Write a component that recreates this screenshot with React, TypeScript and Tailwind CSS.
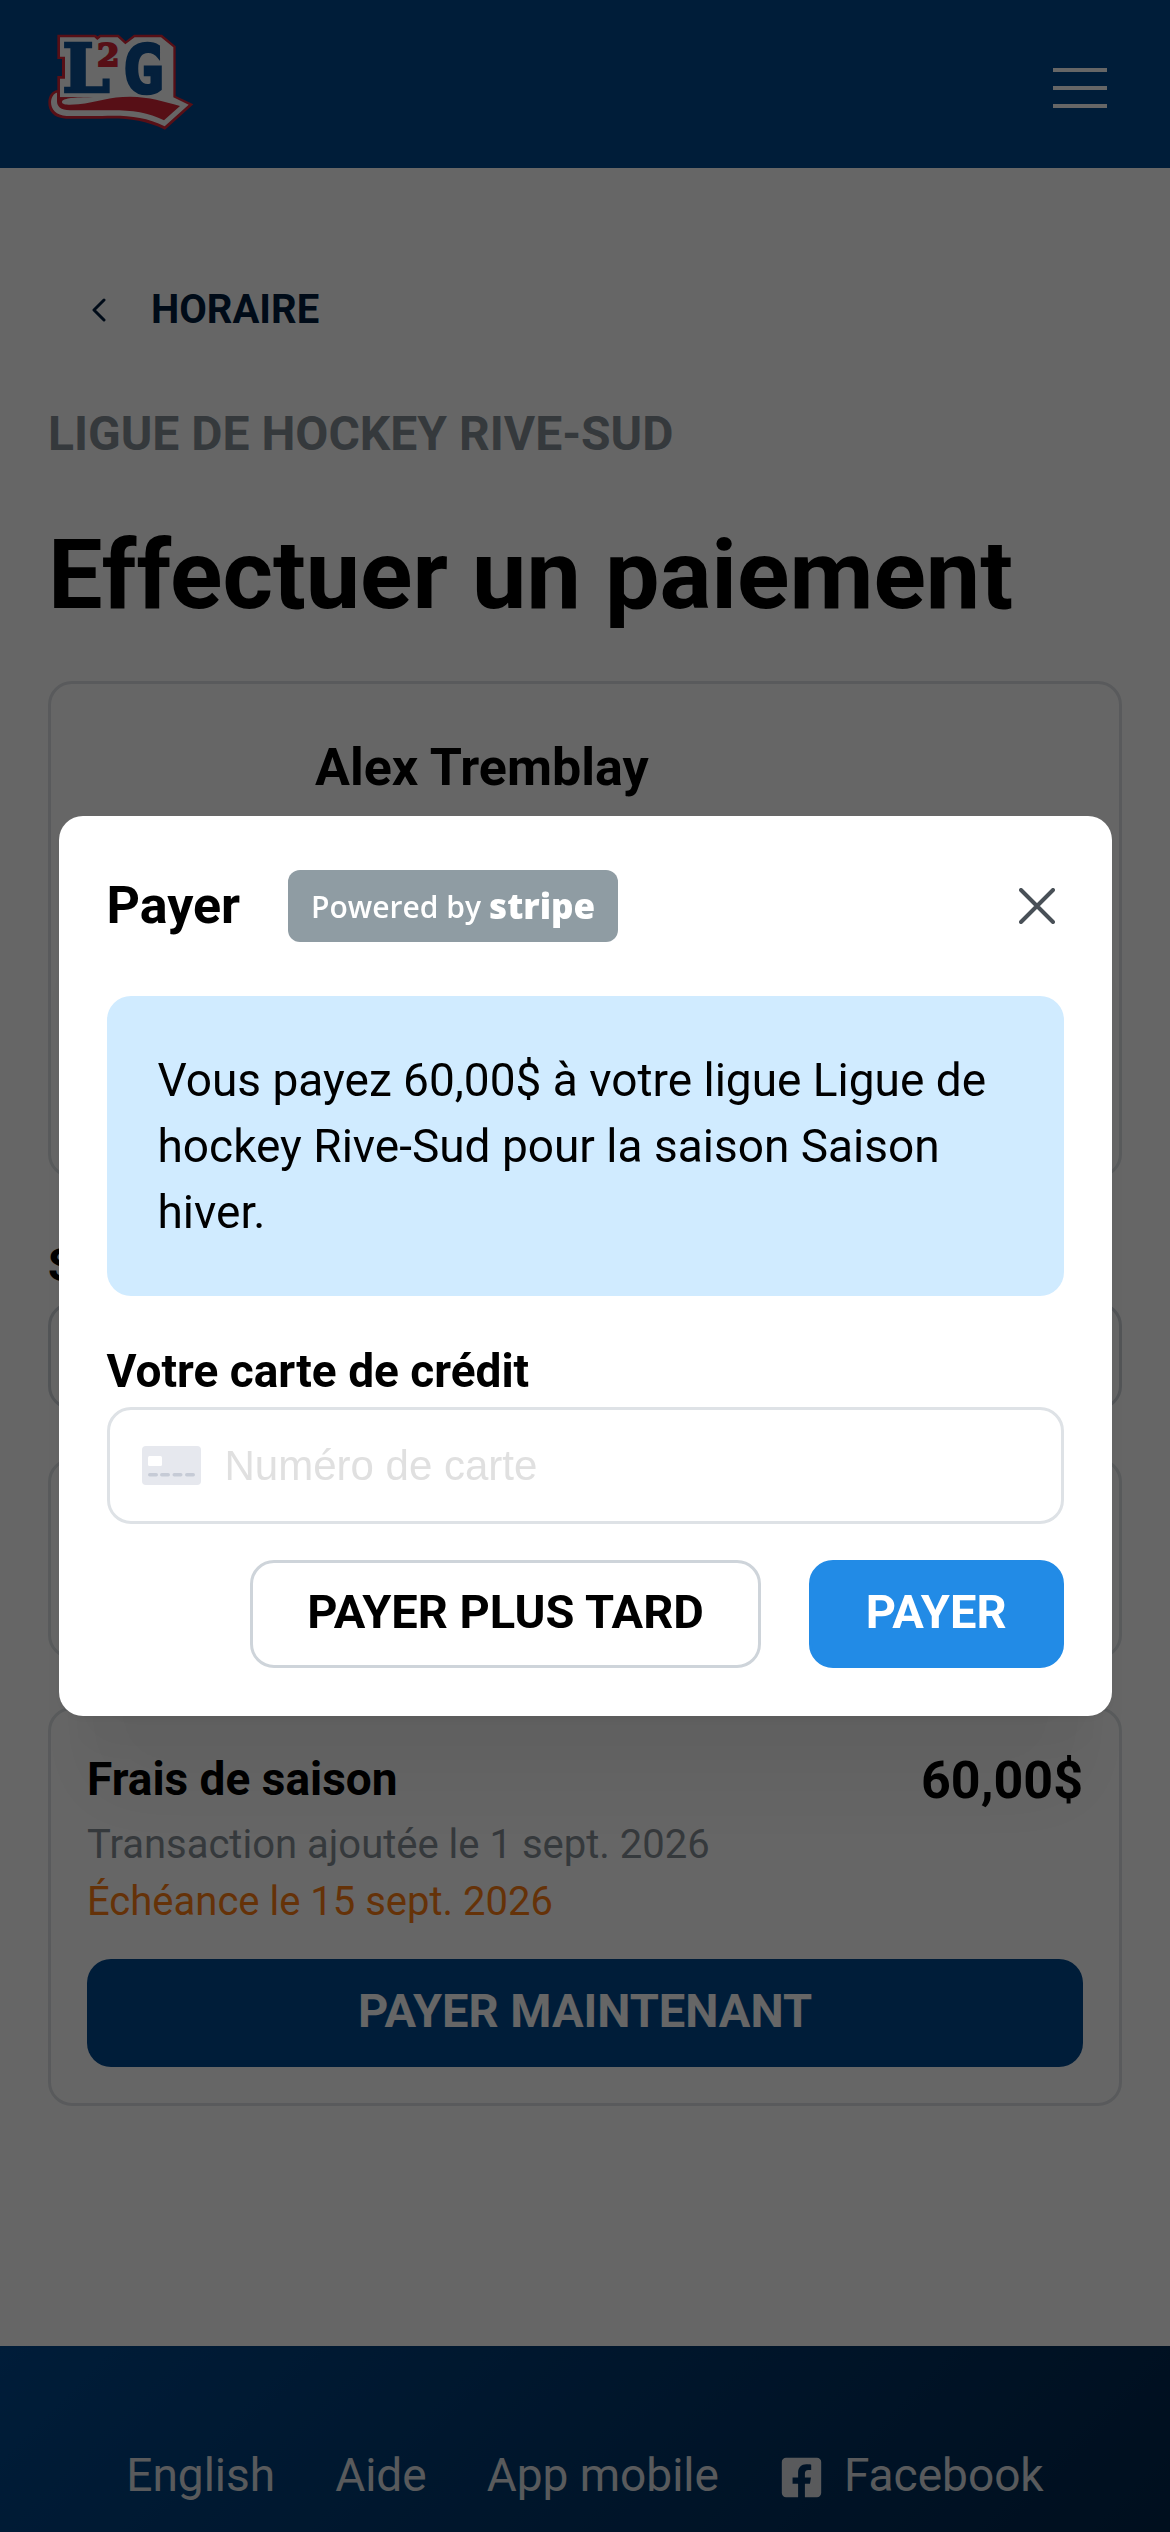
import { useState } from "react";
import { FaFacebookSquare } from "react-icons/fa";

const Logo = () => (
  <svg
    className="h-[96px] w-[146px] overflow-visible"
    viewBox="54 44 438 288"
    role="img"
    aria-label="L2G"
  >
    <path
      d="M82 46H196L203 51L209 46H266L287 66L312 46H396L437 81V230L490 255L405 331C340 300 290 296 215 298H108C70 296 54 274 55 248C56 228 66 216 82 212V170H96V119H82Z"
      fill="#d92638"
    />
    <path
      d="M90 54H193L202 62L212 54H263L286 75L314 54H393L430 84V234L476 256L404 321C345 291 285 287 215 290H110C78 288 63 270 63 248C64 232 72 222 81 220V246C100 232 150 236 190 234H90V178H105V112H90Z"
      fill="#ffffff"
    />
    <path
      d="M82 234H160C110 236 96 240 96 249C98 258 120 257 145 255C200 248 240 232 300 232C360 233 400 246 450 260L402 303C350 275 290 271 215 273H120C92 272 81 262 81 246Z"
      fill="#d92638"
    />
    <g className="[font-family:'DejaVu_Serif',serif] font-bold">
      <text
        x="97"
        y="219"
        fontSize="203"
        fill="#0c5096"
        stroke="#0c5096"
        strokeWidth="8"
      >
        L
      </text>
      <text
        x="201"
        y="141"
        fontSize="97"
        fill="#d92638"
        stroke="#d92638"
        strokeWidth="6"
      >
        2
      </text>
    </g>
    <text
      x="278"
      y="220"
      fontSize="205"
      fill="#0c5096"
      stroke="#0c5096"
      strokeWidth="8"
      className="[font-family:'Liberation_Sans_Narrow','DejaVu_Sans_Mono',monospace] font-bold"
    >
      G
    </text>
  </svg>
);

const CardIcon = () => (
  <svg className="h-[39px] w-[59px] shrink-0" viewBox="0 0 59 39">
    <rect width="59" height="39" rx="4" fill="#e6e8ee" />
    <rect x="6" y="10" width="14" height="10" rx="1.5" fill="#ffffff" />
    <g fill="#c6cbd6">
      <rect x="6" y="27" width="10" height="3.5" rx="1.75" />
      <rect x="18" y="27" width="10" height="3.5" rx="1.75" />
      <rect x="30.5" y="27" width="10" height="3.5" rx="1.75" />
      <rect x="43" y="27" width="10" height="3.5" rx="1.75" />
    </g>
  </svg>
);

const Header = () => (
  <header className="flex h-[168px] items-center justify-between bg-[#00498f] px-12 pr-[63px]">
    <a href="#accueil" className="-mt-1">
      <Logo />
    </a>
    <button
      type="button"
      aria-label="Menu"
      className="mt-2 flex w-[54px] flex-col gap-[14px]"
    >
      <span className="h-1 w-full bg-white" />
      <span className="h-1 w-full bg-white" />
      <span className="h-1 w-full bg-white" />
    </button>
  </header>
);

const Footer = () => (
  <footer className="flex-1 bg-linear-135 from-[#00498f] to-[#00264c] pt-24 pb-6">
    <nav className="flex justify-center gap-[60px] text-[46px] leading-[66px] text-[#dee2e6]">
      <a href="#english">English</a>
      <a href="#aide">Aide</a>
      <a href="#app">App mobile</a>
      <a href="#facebook" className="flex items-center gap-5">
        <FaFacebookSquare className="mt-1 size-[45px]" />
        Facebook
      </a>
    </nav>
  </footer>
);

const PaymentModal = ({ onClose }: { onClose: () => void }) => {
  const [card, setCard] = useState<string>("");

  const formHandler = (e: React.FormEvent<HTMLFormElement>) => {
    e.preventDefault();
  };

  return (
    <div className="fixed inset-0 flex items-center justify-center bg-black/60">
      <div
        role="dialog"
        aria-modal="true"
        aria-labelledby="modal-title"
        className="w-[90%] rounded-3xl bg-white p-12 shadow-[0_3px_9px_#0000000d,0_108px_84px_-21px_#0000000d,0_51px_51px_-21px_#0000000a]"
      >
        <div className="flex items-center pt-1.5">
          <h2 id="modal-title" className="text-[52px] leading-[72px] font-bold">
            Payer
          </h2>
          <div className="ml-12 flex h-[72px] w-[330px] items-center justify-center gap-2 rounded-xl bg-[#8f9ca3] [font-family:'Open_Sans',sans-serif] text-white">
            <span className="text-[30px] font-semibold">Powered by</span>
            <span className="text-[35px] font-extrabold">stripe</span>
          </div>
          <button
            type="button"
            aria-label="Fermer"
            onClick={onClose}
            className="ml-auto flex size-[54px] items-center justify-center"
          >
            <svg className="size-9" viewBox="0 0 36 36">
              <path
                d="M2 2L34 34M34 2L2 34"
                stroke="#495057"
                strokeWidth="4"
                strokeLinecap="round"
              />
            </svg>
          </button>
        </div>

        <p className="mt-[54px] rounded-3xl bg-[#d0ebff] px-[51px] py-[51px] text-[46px] leading-[66px]">
          Vous payez 60,00$ à votre ligue Ligue de hockey Rive-Sud pour la
          saison Saison hiver.
        </p>

        <form onSubmit={formHandler} className="mt-[42px]">
          <label htmlFor="card" className="block text-[46px] leading-[66px] font-bold">
            Votre carte de crédit
          </label>
          <div className="mt-[3px] flex h-[117px] items-center gap-6 rounded-3xl border-[3px] border-[#dee2e6] px-8">
            <CardIcon />
            <input
              id="card"
              type="text"
              value={card}
              onChange={(e) => setCard(e.target.value)}
              placeholder="Numéro de carte"
              className="w-full min-w-0 [font-family:'Liberation_Sans',sans-serif] text-[42px] outline-none placeholder:text-[#e0e0e0]"
            />
          </div>
          <div className="mt-9 flex justify-end gap-12">
            <button
              type="button"
              onClick={onClose}
              className="h-[108px] rounded-3xl border-[3px] border-[#ced4da] px-[54px] pb-1 text-[47px] font-bold"
            >
              PAYER PLUS TARD
            </button>
            <button
              type="submit"
              className="h-[108px] rounded-3xl border-[3px] border-[#228be6] bg-[#228be6] px-[54px] pb-1 text-[47px] font-bold text-white"
            >
              PAYER
            </button>
          </div>
        </form>
      </div>
    </div>
  );
};

const App = () => {
  const [open, setOpen] = useState<boolean>(true);

  return (
    <div className="flex min-h-screen flex-col bg-white [font-family:Roboto,sans-serif] text-black">
      <Header />
      <main className="px-12 pt-22 pb-60">
        <a
          href="#horaire"
          className="flex h-[108px] w-fit items-center gap-[45px] pl-11 text-[40px] font-bold text-[#001c3c]"
        >
          <svg className="h-6 w-[14px]" viewBox="0 0 14 24" fill="none">
            <path
              d="M12 2L2 12L12 22"
              stroke="currentColor"
              strokeWidth="3"
              strokeLinecap="round"
              strokeLinejoin="round"
            />
          </svg>
          HORAIRE
        </a>
        <p className="mt-[37px] text-[48px] leading-[66px] font-bold text-[#868e96]">
          LIGUE DE HOCKEY RIVE-SUD
        </p>
        <h1 className="mt-12 text-[97px] leading-[120px] font-bold">
          Effectuer un paiement
        </h1>

        <section className="mt-[46px] h-[497px] rounded-3xl border-[3px] border-[#dee2e6] pt-12 pl-[264px]">
          <h2 className="text-[52px] leading-[72px] font-bold">Alex Tremblay</h2>
        </section>

        <label
          htmlFor="season"
          className="mt-[54px] block text-[46px] leading-[66px] font-bold"
        >
          Saison
        </label>
        <select
          id="season"
          className="mt-1 block h-[108px] w-full appearance-none rounded-3xl border-[3px] border-[#ced4da]"
        />

        <section className="mt-12 h-[201px] rounded-3xl border-[3px] border-[#dee2e6]" />

        <section className="mt-12 rounded-3xl border-[3px] border-[#dee2e6] p-9">
          <div className="flex justify-between font-bold">
            <h3 className="text-[46px] leading-[66px]">Frais de saison</h3>
            <p className="text-[52px] leading-[70px]">60,00$</p>
          </div>
          <p className="text-[40px] leading-[57px] text-[#868e96]">
            Transaction ajoutée le 1 sept. 2026
          </p>
          <p className="text-[40px] leading-[57px] text-[#fd7e14]">
            Échéance le 15 sept. 2026
          </p>
          <button
            type="button"
            onClick={() => setOpen(true)}
            className="mt-[29px] h-[108px] w-full rounded-3xl bg-[#00498f] pb-1 text-[47px] font-bold text-white"
          >
            PAYER MAINTENANT
          </button>
        </section>
      </main>
      <Footer />
      {open && <PaymentModal onClose={() => setOpen(false)} />}
    </div>
  );
};

export default App;
